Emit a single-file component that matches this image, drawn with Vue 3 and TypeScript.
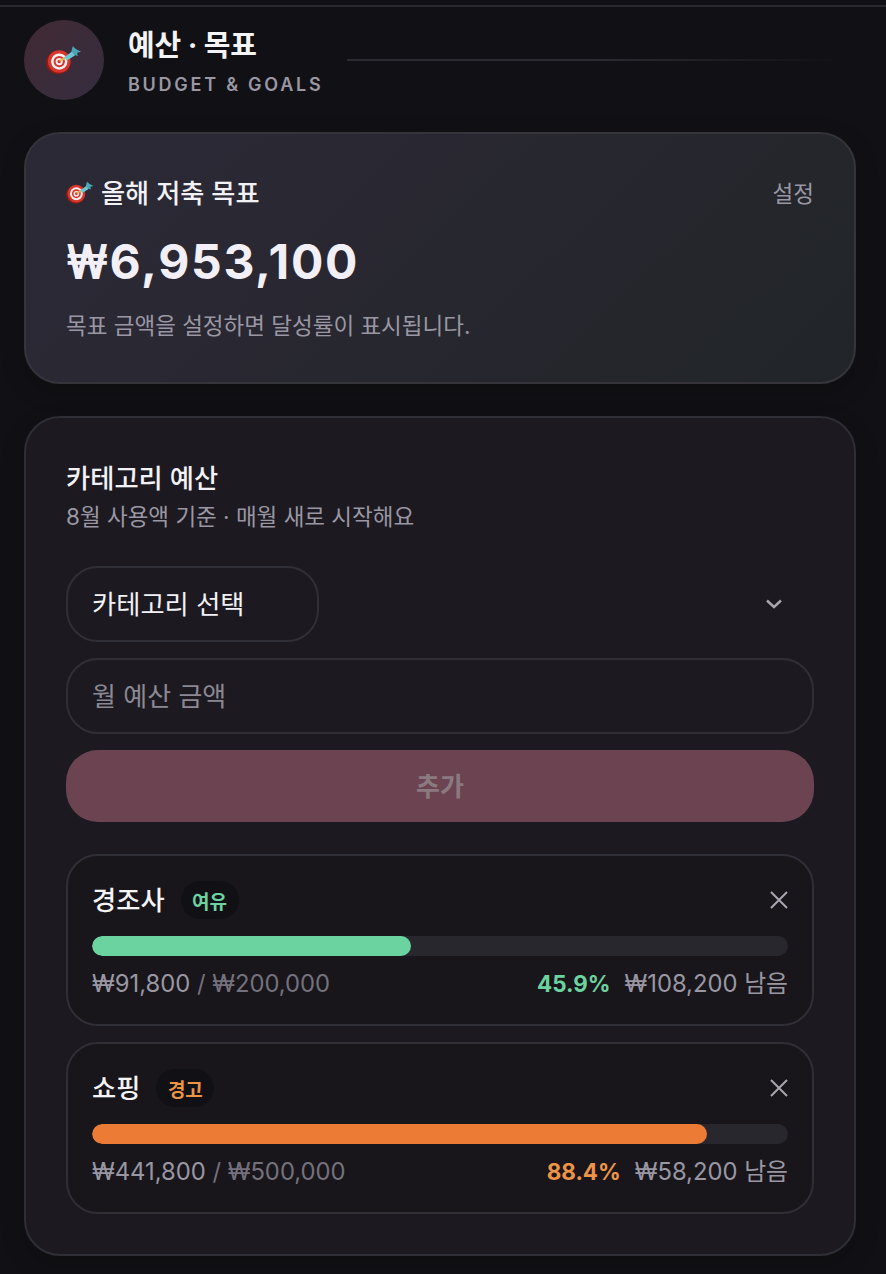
<script setup lang="ts">
interface Budget {
  name: string
  badge: string
  tone: string
  spent: string
  total: string
  pct: number
  pctLabel: string
  left: string
}
const budgets: Budget[] = [
  { name: '경조사', badge: '여유', tone: 'ok', spent: '₩91,800', total: '₩200,000', pct: 45.9, pctLabel: '45.9%', left: '₩108,200 남음' },
  { name: '쇼핑', badge: '경고', tone: 'warn', spent: '₩441,800', total: '₩500,000', pct: 88.4, pctLabel: '88.4%', left: '₩58,200 남음' },
]
</script>

<template>
  <div class="page">
    <div class="topline"></div>
    <header class="head">
      <div class="avatar">
        <svg class="dart big" viewBox="0 0 38 30">
          <ellipse cx="12.6" cy="17.6" rx="12.6" ry="12" fill="#8a1c15" />
          <circle cx="13.6" cy="16.6" r="11.6" fill="#d9352a" />
          <circle cx="13.6" cy="16.6" r="8.4" fill="#f6f0f0" />
          <circle cx="13.6" cy="16.6" r="5.8" fill="#d9352a" />
          <circle cx="13.6" cy="16.6" r="3.7" fill="#f6f0f0" />
          <circle cx="13.6" cy="16.6" r="1.8" fill="#d9352a" />
          <path d="M14 16 L20 12.5" stroke="#e9b84c" stroke-width="2" />
          <path d="M18.5 12.5 L27 6 L30 10 L21.5 15.5Z" fill="#6fc6d2" />
          <path d="M26 6 L27.5 0.8 L31 4 L36 6.5 L32 7.5 L32.5 11 L29 9.5Z" fill="#4aa6b6" />
        </svg>
      </div>
      <div class="head-text">
        <h1>예산 · 목표</h1>
        <p>BUDGET &amp; GOALS</p>
      </div>
      <div class="head-rule"></div>
    </header>

    <section class="card goal">
      <div class="goal-top">
        <h2>
          <svg class="dart small" viewBox="0 0 38 30">
            <ellipse cx="12.6" cy="17.6" rx="12.6" ry="12" fill="#8a1c15" />
            <circle cx="13.6" cy="16.6" r="11.6" fill="#d9352a" />
            <circle cx="13.6" cy="16.6" r="8.4" fill="#f6f0f0" />
            <circle cx="13.6" cy="16.6" r="5.8" fill="#d9352a" />
            <circle cx="13.6" cy="16.6" r="3.7" fill="#f6f0f0" />
            <circle cx="13.6" cy="16.6" r="1.8" fill="#d9352a" />
            <path d="M14 16 L20 12.5" stroke="#e9b84c" stroke-width="2" />
            <path d="M18.5 12.5 L27 6 L30 10 L21.5 15.5Z" fill="#6fc6d2" />
            <path d="M26 6 L27.5 0.8 L31 4 L36 6.5 L32 7.5 L32.5 11 L29 9.5Z" fill="#4aa6b6" />
          </svg>
          올해 저축 목표
        </h2>
        <span class="setting">설정</span>
      </div>
      <div class="amount"><span class="won">₩</span>6,953,100</div>
      <p class="goal-note">목표 금액을 설정하면 달성률이 표시됩니다.</p>
    </section>

    <section class="card budget">
      <h3>카테고리 예산</h3>
      <p class="sub">8월 사용액 기준 · 매월 새로 시작해요</p>

      <div class="select-row">
        <div class="select"><span class="lift">카테고리 선택</span></div>
        <svg class="chev" viewBox="0 0 16 10"><path d="M1 1.5 L8 8 L15 1.5" fill="none" stroke="#a9a6b0" stroke-width="2.4" /></svg>
      </div>
      <div class="input"><span class="lift">월 예산 금액</span></div>
      <div class="add"><span class="lift">추가</span></div>

      <div class="list">
        <article v-for="b in budgets" :key="b.name" class="item">
          <div class="item-top">
            <span class="name lift">{{ b.name }}</span>
            <span class="badge" :class="b.tone">{{ b.badge }}</span>
            <svg class="close" viewBox="0 0 18 18"><path d="M1 1 L17 17 M17 1 L1 17" fill="none" stroke="#a9a6b0" stroke-width="2" /></svg>
          </div>
          <div class="track"><div class="fill" :class="b.tone" :style="{ width: b.pct + '%' }"></div></div>
          <div class="item-foot">
            <span class="used"><span class="spent">{{ b.spent }}</span> / {{ b.total }}</span>
            <span class="right">
              <b class="pct" :class="b.tone">{{ b.pctLabel }}</b>
              <span class="left">{{ b.left }}</span>
            </span>
          </div>
        </article>
      </div>
    </section>
  </div>
</template>

<style>
html, body { margin: 0; background: #111115; }
</style>

<style scoped>
.page {
  width: 886px;
  height: 1274px;
  box-sizing: border-box;
  padding: 5px 30px 0 24px;
  background: #111115;
  font-family: Inter, "Noto Sans CJK KR", sans-serif;
  overflow: hidden;
}
.topline { height: 2px; background: #2a2930; margin: 0 -30px 0 -24px; }
.head { display: flex; align-items: center; height: 80px; margin-top: 13px; }
.avatar {
  width: 80px; height: 80px; border-radius: 50%;
  background: linear-gradient(135deg, #412a33, #352d3f);
  display: flex; align-items: center; justify-content: center;
}
.dart.big { width: 37px; height: 30px; }
.head-text { margin-left: 24px; width: 195px; }
.head-text h1 { margin: 2px 0 0; font-size: 29px; line-height: 40px; font-weight: 700; color: #f4f3f6; letter-spacing: -0.2px; white-space: nowrap; }
.head-text p { margin: 7px 0 0; font-size: 18px; line-height: 24px; font-weight: 600; color: #9a97a3; letter-spacing: 2.75px; white-space: nowrap; }
.head-rule { flex: 1; height: 2px; margin: 0 16px 0 24px; background: linear-gradient(90deg, #2c2b31, #2c2b31 50%, rgba(44,43,49,0)); }
.card { width: 832px; box-sizing: border-box; border: 2px solid #2f2e36; border-radius: 36px; padding: 40px; box-shadow: 0 8px 24px rgba(0,0,0,.18); }
.goal { height: 252px; margin-top: 32px; background: linear-gradient(135deg, #2b2935, #2a2833 30%, #212528); border-color: #35343b; }
.goal-top { display: flex; justify-content: space-between; align-items: center; height: 40px; margin-top: -2px; }
.goal-top h2 { margin: 0; display: flex; align-items: center; font-size: 26.2px; font-weight: 500; color: #f2f1f5; }
.dart.small { width: 29px; height: 23px; margin-right: 6px; }
.setting { font-size: 22.5px; color: #9a97a3; }
.amount { margin-top: 20px; font-size: 48px; line-height: 60px; font-weight: 700; color: #f2f0f6; letter-spacing: 1.7px; white-space: nowrap; }
.won { display: inline-block; transform: scaleX(.85); transform-origin: left center; margin-right: -8px; }
.goal-note { margin: 19px 0 0; font-size: 22.5px; line-height: 30px; color: #9a97a3; }
.budget { height: 840px; margin-top: 32px; background: #1c1a20; }
h3 { margin: 3px 0 0; font-size: 26.3px; line-height: 36px; font-weight: 500; color: #f2f1f5; }
.sub { margin: 4px 0 0; font-size: 22.5px; line-height: 32px; color: #9a97a3; }
.select-row { display: flex; align-items: center; justify-content: space-between; margin-top: 33px; }
.select { width: 253px; height: 76px; box-sizing: border-box; border: 2px solid #302f37; border-radius: 32px; padding-left: 24px; display: flex; align-items: center; font-size: 26.3px; font-weight: 400; color: #f2f1f5; }
.lift { padding-bottom: 4px; }
.chev { width: 16px; height: 10px; margin-right: 32px; }
.input { height: 76px; box-sizing: border-box; border: 2px solid #302f37; border-radius: 32px; padding-left: 24px; margin-top: 16px; display: flex; align-items: center; font-size: 26px; color: #8b8893; }
.add { height: 72px; border-radius: 32px; margin-top: 16px; background: #6b4351; display: flex; align-items: center; justify-content: center; font-size: 26px; font-weight: 700; color: #8a7a80; }
.list { display: flex; flex-direction: column; gap: 16px; margin-top: 32px; }
.item { height: 172px; box-sizing: border-box; border: 2px solid #302f37; border-radius: 32px; background: #18161b; padding: 24px; }
.item-top { display: flex; align-items: center; height: 40px; }
.name { font-size: 26.3px; font-weight: 500; color: #f4f3f6; }
.badge { margin-left: 16px; height: 38px; padding: 0 11.5px; border-radius: 19px; background: #111115; display: flex; align-items: center; font-size: 19px; font-weight: 700; }
.close { width: 18px; height: 18px; margin-left: auto; }
.ok { color: #6cd29f; }
.warn { color: #ed9445; }
.track { height: 20px; margin-top: 16px; border-radius: 10px; background: #28272d; overflow: hidden; }
.fill { height: 100%; border-radius: 10px; }
.fill.ok { background: #6bd39f; }
.fill.warn { background: #ec7b35; }
.item-foot { display: flex; justify-content: space-between; align-items: baseline; line-height: 34px; margin-top: 11px; font-size: 23.8px; }
.used { color: #74717c; }
.spent { color: #9a97a3; }
.right { display: flex; gap: 14px; align-items: baseline; }
.pct { font-weight: 700; font-size: 22.4px; }
.left { color: #9a97a3; }
</style>
